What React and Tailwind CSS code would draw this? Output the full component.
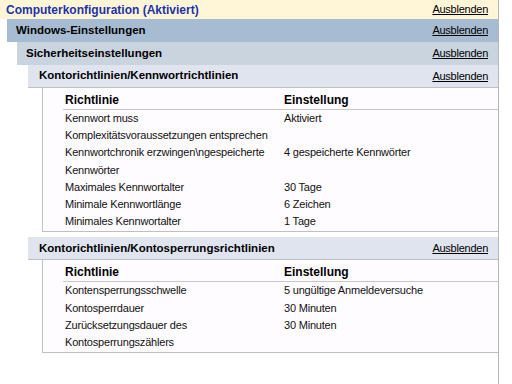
import React from "react";

// each policy name is given as its display lines
const sections = [
  {
    title: "Kontorichtlinien/Kennwortrichtlinien",
    rows: [
      [["Kennwort muss", "Komplexitätsvoraussetzungen entsprechen"], "Aktiviert"],
      [["Kennwortchronik erzwingen\\ngespeicherte", "Kennwörter"], "4 gespeicherte Kennwörter"],
      [["Maximales Kennwortalter"], "30 Tage"],
      [["Minimale Kennwortlänge"], "6 Zeichen"],
      [["Minimales Kennwortalter"], "1 Tage"],
    ],
  },
  {
    title: "Kontorichtlinien/Kontosperrungsrichtlinien",
    rows: [
      [["Kontensperrungsschwelle"], "5 ungültige Anmeldeversuche"],
      [["Kontosperrdauer"], "30 Minuten"],
      [["Zurücksetzungsdauer des", "Kontosperrungszählers"], "30 Minuten"],
    ],
  },
];

function Hide() {
  return (
    <a className="underline text-[#000] text-[11px] font-normal tracking-[-0.25px] cursor-pointer">
      Ausblenden
    </a>
  );
}

function Header({ title, className }) {
  return (
    <div
      className={`flex items-center justify-between h-[23px] pr-[10px] font-bold text-[11.5px] ${className}`}
    >
      <span>{title}</span>
      <Hide />
    </div>
  );
}

function PolicyTable({ rows }) {
  return (
    <div className="ml-[42px] border-l border-b border-[#c0c0c0] bg-[#fffcff] pl-[20px] pt-[3px] pb-[1px]">
      <div className="flex font-bold text-[12px] items-center border-b border-[#c8c8c8] h-[19px]">
        <div className="w-[221px] pl-[2px]">Richtlinie</div>
        <div>Einstellung</div>
      </div>
      {rows.map(([lines, value]) => (
        <div
          key={lines[0]}
          className="flex text-[11px] tracking-[-0.2px] leading-[17.2px] whitespace-nowrap text-[#111]"
        >
          <div className="w-[221px] pl-[2px]">
            {lines.map((l) => (
              <div key={l}>{l}</div>
            ))}
          </div>
          <div>{value}</div>
        </div>
      ))}
    </div>
  );
}

export default function App() {
  return (
    <div className="w-[512px] h-[384px] bg-white text-black font-['Liberation_Sans',Arial,sans-serif]">
      <div className="w-[499px] h-full border-r border-[#b8b8b8]">
        <div className="flex items-center justify-between h-[19px] pl-[6px] pr-[10px] bg-[#fff6d8]">
          <span className="font-bold text-[12px] text-[#1c33a8]">
            Computerkonfiguration (Aktiviert)
          </span>
          <Hide />
        </div>
        <Header title="Windows-Einstellungen" className="ml-[7px] pl-[9px] bg-[#a7bcd2]" />
        <Header title="Sicherheitseinstellungen" className="ml-[17px] pl-[9px] bg-[#c9d4df]" />
        {sections.map((s, i) => (
          <div key={s.title} className={i > 0 ? "mt-[5px]" : ""}>
            <Header
              title={s.title}
              className="ml-[28px] pl-[11px] bg-[#dfe4ef] border-b border-[#c0c0c0]"
            />
            <PolicyTable rows={s.rows} />
          </div>
        ))}
      </div>
    </div>
  );
}
